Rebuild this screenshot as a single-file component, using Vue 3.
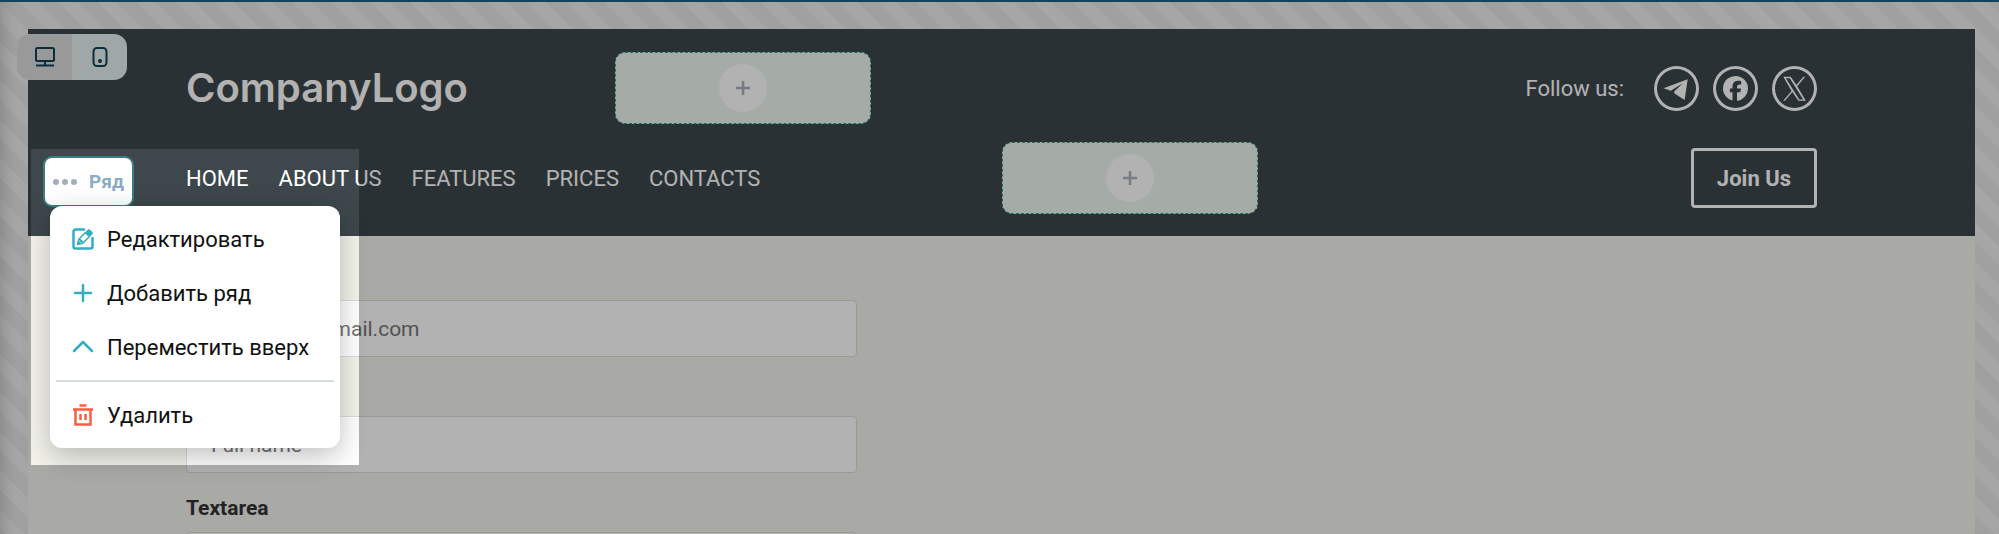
<script setup>
const nav = ['HOME', 'ABOUT US', 'FEATURES', 'PRICES', 'CONTACTS']
</script>

<template>
  <div class="editor">
    <main class="frame">
      <header class="site-header">
        <div class="row row-top">
          <a class="logo" href="#">CompanyLogo</a>
          <button class="zone" type="button" aria-label="Add block">
            <span class="zone-plus"><svg viewBox="0 0 14 14" width="14" height="14"><path d="M7 0v14M0 7h14" /></svg></span>
          </button>
          <div class="follow">
            <span>Follow us:</span>
            <div class="socials">
              <a class="social" href="#" aria-label="Telegram">
                <svg viewBox="0 0 45 45" width="45" height="45"><path d="M9.500 22.200 33.700 13.200 30.600 34 20.600 27.500 20 25.800 28.800 17.300 16.800 24.800Z" /></svg>
              </a>
              <a class="social" href="#" aria-label="Facebook">
                <svg viewBox="0 0 45 45" width="45" height="45"><path d="M35 22.500a12.500 12.500 0 1 0-15.500 12.100v-8.300h-2.600v-3.800h2.600v-1.600c0-4.200 1.900-6.200 6-6.200.8 0 2.100.2 2.700.3v3.500h-1.400c-2 0-2.800.8-2.800 2.700v1.300h4l-.7 3.800H24v8.600a12.500 12.500 0 0 0 11-12.400Z" /></svg>
              </a>
              <a class="social" href="#" aria-label="X">
                <svg viewBox="0 0 45 45" width="45" height="45"><path fill-rule="evenodd" d="M11.300 10.800h7.400l5.700 8.200 7-8.200h1.800l-8 9.400 8.600 14.600h-7.400l-6-8.700-7.500 8.700h-1.800l8.500-9.900ZM13.800 12.200l13.500 21.200h3.900L17.800 12.200Z" /></svg>
              </a>
            </div>
          </div>
        </div>
        <div class="row row-nav">
          <nav class="nav">
            <a v-for="n in nav" :key="n" href="#">{{ n }}</a>
          </nav>
          <button class="zone" type="button" aria-label="Add block">
            <span class="zone-plus"><svg viewBox="0 0 14 14" width="14" height="14"><path d="M7 0v14M0 7h14" /></svg></span>
          </button>
          <button class="join" type="button">Join Us</button>
        </div>
      </header>
      <form class="form" @submit.prevent>
        <div class="field">
          <label for="email">Email</label>
          <input id="email" type="email" placeholder="nickname@gmail.com" />
        </div>
        <div class="field">
          <label for="name">Name</label>
          <input id="name" type="text" placeholder="Full name" />
        </div>
        <div class="field">
          <label for="message">Textarea</label>
          <textarea id="message" rows="4"></textarea>
        </div>
      </form>
    </main>

    <div class="devices">
      <button class="device active" type="button" aria-label="Desktop">
        <svg viewBox="0 0 20 20" width="20" height="20"><rect x="1" y="1" width="18" height="13" rx="1.500" /><path d="M10 14v4M1 18.500h18" /></svg>
      </button>
      <button class="device" type="button" aria-label="Mobile">
        <svg viewBox="0 0 20 20" width="20" height="20"><rect x="3.500" y="1" width="13" height="18" rx="3.500" /><circle cx="10" cy="14" r="1" /></svg>
      </button>
    </div>

    <div class="spotlight"></div>

    <button class="tag" type="button">
      <span class="dots"><i></i><i></i><i></i></span>Ряд
    </button>

    <div class="menu" role="menu">
      <button type="button" role="menuitem">
        <svg class="edit" viewBox="0 0 22 22" width="22" height="22"><path d="M12 1.500H3.500a2 2 0 0 0-2 2v15a2 2 0 0 0 2 2h15a2 2 0 0 0 2-2V10" /><path class="thin" d="M5.500 16.500 6.800 11.200 13.500 4.500 17.500 8.500 10.800 15.200ZM6.800 11.200c2 .3 3.500 1.800 4 4M6 16l3.500-3.500" /><path class="solid" d="m13.500 4.500 2.500-2.500q.9-.8 1.800 0L20 4.200q.8.900 0 1.800l-2.500 2.500Z" /></svg>
        Редактировать
      </button>
      <button type="button" role="menuitem">
        <svg viewBox="0 0 22 22" width="22" height="22"><path d="M11 3v16M3 11h16" /></svg>
        Добавить ряд
      </button>
      <button type="button" role="menuitem">
        <svg viewBox="0 0 22 22" width="22" height="22"><path d="m2 15 9-9 9 9" /></svg>
        Переместить вверх
      </button>
      <hr />
      <button type="button" role="menuitem">
        <svg class="danger" viewBox="0 0 22 22" width="22" height="22"><path d="M7.500 1.500h7M1 5.500h20M3.500 5.500v15h15v-15M8.500 10v6M13.500 10v6" /></svg>
        Удалить
      </button>
    </div>
  </div>
</template>

<style>
body {
  overflow: hidden;
}
</style>

<style scoped>
* {
  box-sizing: border-box;
}
.editor {
  position: relative;
  height: 100vh;
  overflow: hidden;
  padding: 27px 24px 0 28px;
  border-top: 2px solid #17425a;
  background: linear-gradient(45deg, #e5e5e5 25%, #eeeeee 25% 50%, #e5e5e5 50% 75%, #eeeeee 75%) 0 0 / 39px 39px;
  box-shadow: inset 14px 0 14px -10px rgba(0, 0, 0, 0.15);
  font-family: Roboto, "Liberation Sans", sans-serif;
  color: #333;
}
button {
  font: inherit;
  border: 0;
  background: none;
  cursor: pointer;
}
a {
  color: inherit;
  text-decoration: none;
}
.frame {
  background: #f3f3ec;
}
.site-header {
  display: flex;
  flex-direction: column;
  gap: 18px;
  padding: 23px 158px 22px;
  background: #3d474c;
  color: #fff;
  font-size: 22px;
}
.row {
  display: grid;
  gap: 16px;
  align-items: center;
}
.row-top {
  grid-template-columns: 413fr 256fr 931fr;
}
.row-nav {
  grid-template-columns: 801fr 256fr 543fr;
}
.logo {
  font: 600 40px/48px Inter, "Liberation Sans", sans-serif;
}
.zone {
  display: flex;
  align-items: center;
  justify-content: center;
  height: 72px;
  padding: 0;
  border: 1px dashed #2fa572;
  border-radius: 10px;
  background: #edf6f0;
}
.zone-plus {
  display: flex;
  align-items: center;
  justify-content: center;
  width: 48px;
  height: 48px;
  border-radius: 50%;
  background: #fff;
}
.zone-plus path {
  stroke: #a8b0ba;
  stroke-width: 2.500;
}
.follow {
  display: flex;
  align-items: center;
  justify-content: flex-end;
  gap: 30px;
}
.socials {
  display: flex;
  gap: 14px;
}
.social {
  display: flex;
  width: 45px;
  height: 45px;
  border-radius: 50%;
  box-shadow: inset 0 0 0 3px #fff;
}
.social path {
  fill: #fff;
}
.nav {
  display: flex;
  gap: 30px;
}
.join {
  justify-self: end;
  height: 60px;
  padding: 0 23px;
  border: 3px solid #fff;
  border-radius: 4px;
  color: #fff;
  font-weight: 700;
}
.form {
  display: flex;
  flex-direction: column;
  gap: 23px;
  padding: 28px 158px;
}
.field {
  display: flex;
  flex-direction: column;
  gap: 12px;
  width: 100%;
  max-width: 671px;
}
.field label {
  font-size: 21px;
  font-weight: 700;
  line-height: 24px;
}
.field input,
.field textarea {
  width: 100%;
  height: 57px;
  padding: 0 24px;
  border: 1px solid #dcdcdc;
  border-radius: 4px;
  background: #fff;
  font: 21px Roboto, sans-serif;
  color: #333;
  resize: none;
}
.field textarea {
  height: 120px;
}
.field ::placeholder {
  color: #757575;
}
.devices {
  position: absolute;
  top: 32px;
  left: 17px;
  display: flex;
  overflow: hidden;
  border-radius: 13px;
  background: #e6efef;
}
.device {
  display: flex;
  align-items: center;
  justify-content: center;
  width: 55px;
  height: 46px;
  padding: 0;
}
.device.active {
  background: #dbdbdb;
}
.device svg {
  fill: none;
  stroke: #104358;
  stroke-width: 2;
}
.spotlight {
  position: absolute;
  top: 147px;
  left: 31px;
  width: 328px;
  height: 316px;
  box-shadow: 0 0 0 4000px rgba(0, 0, 0, 0.3);
  pointer-events: none;
}
.tag {
  position: absolute;
  top: 154px;
  left: 43px;
  display: flex;
  align-items: center;
  gap: 12px;
  height: 51px;
  padding: 0 8px;
  border: 2px solid #3b7d83;
  border-radius: 9px;
  background: #fff;
  color: #8bacc5;
  font-size: 19px;
  font-weight: 700;
}
.dots {
  display: flex;
  gap: 3px;
}
.dots i {
  width: 6px;
  height: 6px;
  border-radius: 50%;
  background: #a3aebc;
}
.menu {
  position: absolute;
  top: 204px;
  left: 50px;
  width: 290px;
  padding: 6px;
  border-radius: 12px;
  background: #fff;
  box-shadow: 0 8px 28px rgba(0, 0, 0, 0.25);
}
.menu button {
  display: flex;
  align-items: center;
  gap: 13px;
  width: 100%;
  height: 54px;
  padding: 0 16px;
  font-size: 22px;
  color: #111;
  white-space: nowrap;
}
.menu svg {
  fill: none;
  stroke: #35adc1;
  stroke-width: 2.500;
  stroke-linejoin: round;
  stroke-linecap: round;
}
.menu svg .thin {
  stroke-width: 1.500;
}
.menu svg .solid {
  fill: #35adc1;
  stroke-width: 1;
}
.menu svg.danger {
  stroke: #fb5d42;
  stroke-linecap: butt;
  stroke-linejoin: miter;
}
.menu hr {
  height: 2px;
  margin: 6px 0;
  border: 0;
  background: #d5dddd;
}
</style>
